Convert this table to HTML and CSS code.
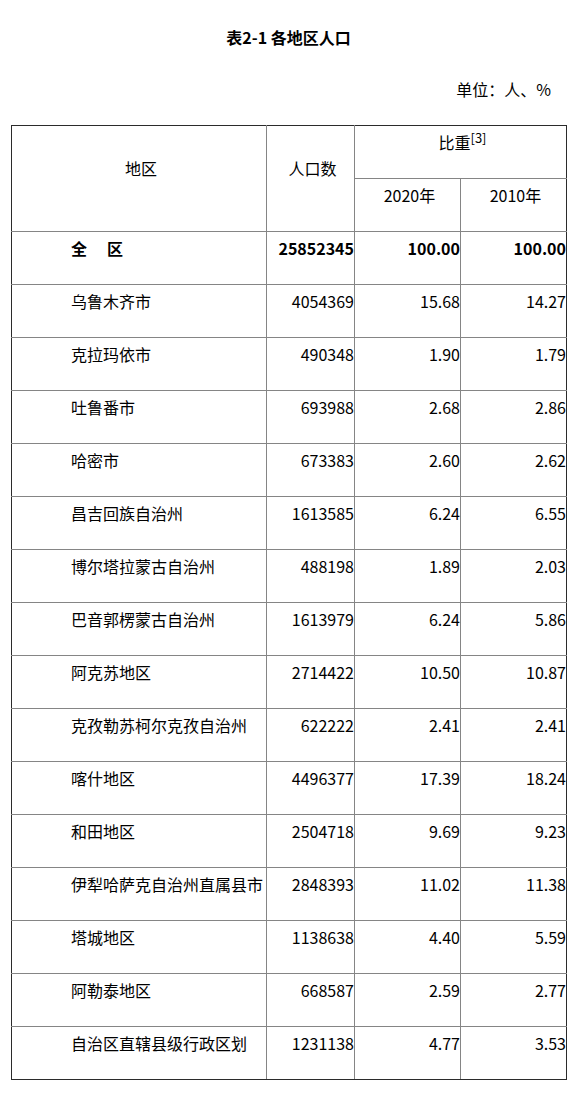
FILE: index.html
```html
<!DOCTYPE html>
<html lang="zh-CN">
<head>
<meta charset="utf-8">
<title>表2-1 各地区人口</title>
<link rel="stylesheet" href="styles.css">
</head>
<body>
<div class="page">
  <h1 class="title">表2-1 各地区人口</h1>
  <p class="unit">单位：人、%</p>
  <table class="data">
    <colgroup>
      <col class="c-region">
      <col class="c-pop">
      <col class="c-pct">
      <col class="c-pct">
    </colgroup>
    <thead>
      <tr>
        <th rowspan="2" class="hd-tall edge-l edge-t">地区</th>
        <th rowspan="2" class="hd-tall edge-t">人口数</th>
        <th colspan="2" class="hd edge-t edge-r">比重<sup>[3]</sup></th>
      </tr>
      <tr>
        <th class="hd">2020年</th>
        <th class="hd edge-r">2010年</th>
      </tr>
    </thead>
    <tbody>
      <tr class="total">
        <td class="region edge-l">全<span class="gap"></span>区</td>
        <td class="num">25852345</td>
        <td class="num">100.00</td>
        <td class="num edge-r">100.00</td>
      </tr>
      <tr><td class="region edge-l">乌鲁木齐市</td><td class="num">4054369</td><td class="num">15.68</td><td class="num edge-r">14.27</td></tr>
      <tr><td class="region edge-l">克拉玛依市</td><td class="num">490348</td><td class="num">1.90</td><td class="num edge-r">1.79</td></tr>
      <tr><td class="region edge-l">吐鲁番市</td><td class="num">693988</td><td class="num">2.68</td><td class="num edge-r">2.86</td></tr>
      <tr><td class="region edge-l">哈密市</td><td class="num">673383</td><td class="num">2.60</td><td class="num edge-r">2.62</td></tr>
      <tr><td class="region edge-l">昌吉回族自治州</td><td class="num">1613585</td><td class="num">6.24</td><td class="num edge-r">6.55</td></tr>
      <tr><td class="region edge-l">博尔塔拉蒙古自治州</td><td class="num">488198</td><td class="num">1.89</td><td class="num edge-r">2.03</td></tr>
      <tr><td class="region edge-l">巴音郭楞蒙古自治州</td><td class="num">1613979</td><td class="num">6.24</td><td class="num edge-r">5.86</td></tr>
      <tr><td class="region edge-l">阿克苏地区</td><td class="num">2714422</td><td class="num">10.50</td><td class="num edge-r">10.87</td></tr>
      <tr><td class="region edge-l">克孜勒苏柯尔克孜自治州</td><td class="num">622222</td><td class="num">2.41</td><td class="num edge-r">2.41</td></tr>
      <tr><td class="region edge-l">喀什地区</td><td class="num">4496377</td><td class="num">17.39</td><td class="num edge-r">18.24</td></tr>
      <tr><td class="region edge-l">和田地区</td><td class="num">2504718</td><td class="num">9.69</td><td class="num edge-r">9.23</td></tr>
      <tr><td class="region edge-l">伊犁哈萨克自治州直属县市</td><td class="num">2848393</td><td class="num">11.02</td><td class="num edge-r">11.38</td></tr>
      <tr><td class="region edge-l">塔城地区</td><td class="num">1138638</td><td class="num">4.40</td><td class="num edge-r">5.59</td></tr>
      <tr><td class="region edge-l">阿勒泰地区</td><td class="num">668587</td><td class="num">2.59</td><td class="num edge-r">2.77</td></tr>
      <tr class="last"><td class="region edge-l edge-b">自治区直辖县级行政区划</td><td class="num edge-b">1231138</td><td class="num edge-b">4.77</td><td class="num edge-r edge-b">3.53</td></tr>
    </tbody>
  </table>
</div>
</body>
</html>
```
FILE: styles.css
```css
html, body {
  margin: 0;
  padding: 0;
  background: #fff;
}

body {
  font-family: "Noto Sans CJK SC", "Noto Sans", sans-serif;
  font-size: 16px;
  line-height: 21px;
  color: #000;
}

.page {
  width: 555px;
  padding-left: 11px;
}

.title {
  margin: 27px 0 0;
  font-size: 16px;
  font-weight: bold;
  line-height: 21px;
  text-align: center;
}

.unit {
  margin: 31px 0 0;
  padding-right: 15px;
  text-align: right;
}

.data {
  margin-top: 25px;
  width: 555px;
  border-collapse: collapse;
  table-layout: fixed;
}

.c-region { width: 255px; }
.c-pop { width: 88px; }
.c-pct { width: 106px; }

.data tr {
  height: 53px;
}

.data th,
.data td {
  border: 1px solid #858585;
  padding: 6px 0 0 4px;
  vertical-align: top;
  font-weight: normal;
  white-space: nowrap;
}

.data th {
  text-align: center;
}

.data .hd-tall {
  padding-top: 32px;
}

.data .edge-l { border-left-color: #2b2b2b; }
.data .edge-r { border-right-color: #2b2b2b; }
.data .edge-t { border-top-color: #2b2b2b; }
.data .edge-b { border-bottom-color: #2b2b2b; }

.data td.region {
  padding-left: 59px;
  text-align: left;
}

.data td.num {
  text-align: right;
  padding-right: 0;
}

.total td {
  font-weight: bold;
}

.gap {
  display: inline-block;
  width: 20px;
}

sup {
  font-size: 13px;
  line-height: 0;
  vertical-align: 6px;
}
```
